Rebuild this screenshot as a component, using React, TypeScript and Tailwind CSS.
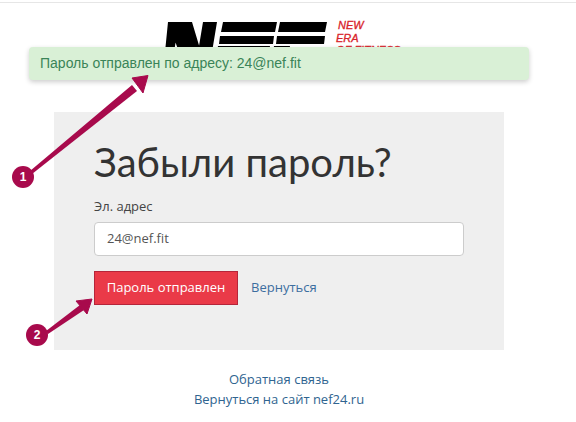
const sans = "font-['Open_Sans','Liberation_Sans',sans-serif]";

function Logo() {
  return (
    <div className="flex h-[50px] items-start pl-[165px]">
      <svg width="165" height="30" viewBox="0 0 165 30" className="shrink-0">
        <path d="M3 0H14L9 30H0Z M3 0H27L36 30H14Z M38 0H52L47 30H33Z" fill="#000" />
        <path d="M58 0H112L110 10H56Z M55 14H109L108 22H54Z M53 24H105L104 30H52Z" fill="#000" />
        <path d="M115 0H162L160 10H113Z M112 14H160L159 22H111Z M109 24H125L124 30H108Z" fill="#000" />
      </svg>
      <div className="ml-[6px] mt-[-3px] text-[11px] font-normal italic leading-[12.5px] text-[#d8232a] font-['Liberation_Sans',sans-serif] [-webkit-text-stroke:0.3px_#d8232a]">
        <div className="pl-[2px]">NEW</div>
        <div>ERA</div>
        <div>OF FITNESS</div>
      </div>
    </div>
  );
}

function Callouts() {
  return (
    <svg className="absolute left-0 top-0" width="576" height="422" viewBox="0 0 576 422">
      <g fill="#a80a4c">
        <path d="M30 171L132 85L137 91L32 174Z" />
        <path d="M148 75.500L132 78L143 93Z" stroke="#a80a4c" strokeLinejoin="round" />
        <path d="M46 331L80 305L84 310L48 334Z" />
        <path d="M92 299L76 301L87 314Z" stroke="#a80a4c" strokeLinejoin="round" />
        <circle cx="23" cy="177" r="11" />
        <circle cx="37" cy="335" r="11" />
      </g>
      <g fill="#fff" fontFamily="'Liberation Sans', sans-serif" fontSize="12" fontWeight="700" textAnchor="middle">
        <text x="23" y="181">1</text>
        <text x="37" y="339">2</text>
      </g>
    </svg>
  );
}

export default function App() {
  return (
    <div className={`relative h-[422px] w-[576px] overflow-hidden bg-white ${sans}`}>
      <div className="mt-[2px] border-t border-[#e6e6e6] pt-[19px]">
        <Logo />
      </div>

      <div className="w-[558px]">
        <div className="mx-auto mt-[40px] h-[238px] w-[450px] bg-[#efefef] px-10 pt-[25px]">
          <h1 className="text-[40px] font-normal leading-[50px] text-[#333] font-['Lato','Open_Sans',sans-serif]">Забыли пароль?</h1>
          <label className="mt-[9px] block text-[13px] leading-5 text-[#444]">Эл. адрес</label>
          <div className="mt-[6px] flex h-[34px] w-[370px] items-center rounded border border-[#ccc] bg-white px-3 text-[13px] text-[#555]">
            24@nef.fit
          </div>
          <div className="mt-[15px] flex items-center gap-[13px]">
            <button className="h-[34px] w-[144px] border border-[#b5253a] bg-[#ea3a48] text-[13px] text-white">
              Пароль отправлен
            </button>
            <a className="text-[13px] text-[#3c6e9f]">Вернуться</a>
          </div>
        </div>

        <div className="mt-[19px] text-center text-[13px] leading-5 text-[#2f6490]">
          <a className="block">Обратная связь</a>
          <a className="block">Вернуться на сайт nef24.ru</a>
        </div>
      </div>

      <div className="absolute left-[29px] top-[47px] flex h-[33px] w-[500px] items-center rounded bg-[#d9f0d6] pl-[11px] text-[14px] text-[#3a8458] shadow-[0_2px_5px_rgba(0,0,0,0.2)] font-['Liberation_Sans',sans-serif]">
        Пароль отправлен по адресу: 24@nef.fit
      </div>

      <Callouts />
    </div>
  );
}
